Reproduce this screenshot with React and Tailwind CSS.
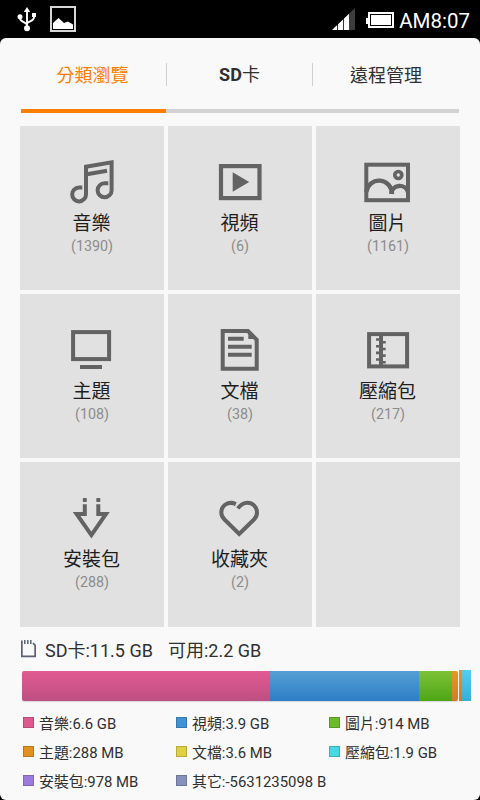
const MusicIcon = () => (
  <g fill="none" stroke="#636363" strokeWidth="4">
    <path d="M62.3 61.6 H59 A6.9 6.9 0 1 0 66 68.3 V40.8 L91.6 36.4 V64.2 A7 7 0 1 1 84.6 57.3 H88.3" />
    <path d="M67 48.2 L87 44.8" />
  </g>
)

const VideoIcon = () => (
  <>
    <rect x="53" y="40.1" width="38.5" height="32" fill="none" stroke="#636363" strokeWidth="4.2" />
    <path d="M64.7 46.3 L81.2 56 L64.7 65.8 Z" fill="#636363" />
  </>
)

const PictureIcon = () => (
  <g fill="none" stroke="#636363" strokeWidth="4">
    <rect x="50.3" y="38.7" width="41.7" height="35.5" />
    <circle cx="82.3" cy="49" r="3.5" strokeWidth="3.7" />
    <path d="M50.3 66 A12.9 12.9 0 0 1 76 68" strokeWidth="4.4" />
    <path d="M75.2 68 A8.6 8.6 0 0 1 92 66" strokeWidth="4.4" />
  </g>
)

const ThemeIcon = () => (
  <g fill="none" stroke="#636363" strokeWidth="4">
    <rect x="53.1" y="38.1" width="36" height="27" />
    <path d="M60 73 H82" />
  </g>
)

const DocIcon = () => (
  <g fill="none" stroke="#636363" strokeWidth="4">
    <path d="M54.7 37 H80 L88.7 45.8 V74.7 H54.7 Z" />
    <path d="M80.3 35.3 V45 H90.5 Z" fill="#636363" stroke="none" />
    <path d="M60 44.7 H75.7 M60 52.7 H83.7 M60 60.7 H83.7" />
  </g>
)

const ZipIcon = () => (
  <g fill="none" stroke="#636363" strokeWidth="4">
    <rect x="53.1" y="40.1" width="38" height="32.3" />
    <path d="M65 40 V72" />
    <path
      d="M60 45.5 H64 M60 52.2 H64 M60 58.9 H64 M60 65.5 H64 M66 48.3 H69.7 M66 55 H69.7 M66 61.6 H69.7 M66 68.2 H69.7"
      strokeWidth="2.6"
    />
  </g>
)

const InstallIcon = () => (
  <>
    <path d="M64.8 42.3 V51.9 H56.6 L71.4 73.1 L86 51.9 H78.3 V42.3" fill="none" stroke="#636363" strokeWidth="4" />
    <rect x="62.8" y="36" width="4" height="4" rx="0.8" fill="#636363" />
    <rect x="76.3" y="36" width="4" height="4" rx="0.8" fill="#636363" />
  </>
)

const HeartIcon = () => (
  <path
    d="M67.9 42.1 C60 38.5 53.3 43.7 53.3 50.5 C53.3 53.3 54.4 55.5 56.5 57.5 L71.2 72 L86 57.5 C88 55.5 89 53.3 89 50.5 C89 45 84.8 40.7 79.5 40.7 C75.2 40.7 72.2 43 69.8 46.4"
    fill="none"
    stroke="#636363"
    strokeWidth="4"
  />
)

const categories = [
  { label: '音樂', count: 1390, icon: MusicIcon },
  { label: '視頻', count: 6, icon: VideoIcon },
  { label: '圖片', count: 1161, icon: PictureIcon },
  { label: '主題', count: 108, icon: ThemeIcon },
  { label: '文檔', count: 38, icon: DocIcon },
  { label: '壓縮包', count: 217, icon: ZipIcon },
  { label: '安裝包', count: 288, icon: InstallIcon },
  { label: '收藏夾', count: 2, icon: HeartIcon },
]

const legend = [
  { label: '音樂', size: '6.6 GB', color: 'bg-[#dd5a8e] border-[#b84a76]' },
  { label: '視頻', size: '3.9 GB', color: 'bg-[#4292d1] border-[#3778ac]' },
  { label: '圖片', size: '914 MB', color: 'bg-[#6cbb2a] border-[#599a24]' },
  { label: '主題', size: '288 MB', color: 'bg-[#e09120] border-[#b9781c]' },
  { label: '文檔', size: '3.6 MB', color: 'bg-[#e0d044] border-[#b8ab3a]' },
  { label: '壓縮包', size: '1.9 GB', color: 'bg-[#45d9e4] border-[#3ab2bb]' },
  { label: '安裝包', size: '978 MB', color: 'bg-[#9d7add] border-[#8165b6]' },
  { label: '其它', size: '-5631235098 B', color: 'bg-[#8590bb] border-[#6e779a]' },
]

function StatusBar() {
  return (
    <header className="flex h-[38px] items-center justify-between pl-[17px] pr-[10px] text-white">
      <div className="flex items-center gap-[14px]">
        <svg width="19" height="26" viewBox="17 6 19 26" fill="none" stroke="#fff" strokeWidth="1.9">
          <path d="M27 11 V28 M20 17 V18.5 C20 22 27 22 27 25 M34 15 V17.5 C34 21.5 27 21 27 24" />
          <path d="M27 7 L30.2 12 H23.8 Z" fill="#fff" stroke="none" />
          <circle cx="20" cy="16.7" r="2.5" fill="#fff" stroke="none" />
          <rect x="32" y="13" width="4" height="4" fill="#fff" stroke="none" />
          <circle cx="27" cy="28.2" r="3" fill="#fff" stroke="none" />
        </svg>
        <svg width="26" height="26" viewBox="50 6 26 26">
          <rect x="51" y="7" width="24" height="24" fill="none" stroke="#d6d6d6" strokeWidth="2" />
          <path d="M53 29 V23 L58.5 18 L64 23 L68 21.5 L73 24.5 V29 Z" fill="#fff" />
        </svg>
      </div>
      <div className="flex items-center">
        <svg width="62" height="24" viewBox="332 7 62 24">
          <path d="M332 30 L355 8 V30 Z" fill="#fff" />
          <path d="M349 8 H355 V30 H349 Z" fill="#000" />
          <path d="M349 13.7 L355 8 V30 H349 Z" fill="#3d3d3d" />
          <path d="M337.5 23 V30 M343.5 18 V30" stroke="#000" strokeWidth="0.8" />
          <rect x="366" y="18" width="3" height="6" fill="#fff" />
          <rect x="369" y="13" width="24" height="14" fill="none" stroke="#fff" strokeWidth="2" />
          <rect x="371" y="15" width="20" height="10" fill="#fff" />
          <rect x="370.5" y="14.5" width="21" height="11" fill="none" stroke="#000" strokeWidth="0.9" />
        </svg>
        <span className="ml-[5px] mt-[3px] text-[20.5px] leading-6">AM8:07</span>
      </div>
    </header>
  )
}

function Tabs() {
  return (
    <nav className="mx-[21px] h-[75px] text-[18px]">
      <div className="flex h-[71px] items-center pt-[1px]">
        <div className="w-[145px] pr-[2px] pt-[2px] text-center text-[#ff7e00]">分類瀏覽</div>
        <div className="h-[23px] w-px bg-[#d0d0d0]" />
        <div className="w-[145px] text-center">
          <b className="font-bold">SD</b>卡
        </div>
        <div className="h-[23px] w-px bg-[#d0d0d0]" />
        <div className="w-[146px] pt-[2px] text-center">遠程管理</div>
      </div>
      <div className="h-1 bg-[#d2d2d2]">
        <div className="h-1 w-[145px] bg-[#ff7e00]" />
      </div>
    </nav>
  )
}

function Tile({ label, count, icon: Icon }) {
  return (
    <div className="flex flex-col items-center bg-[#e1e1e1] pt-7">
      <svg width="60" height="52" viewBox="42 28 60 52" className="shrink-0">
        <Icon />
      </svg>
      <div className="mt-[6px] pr-px text-[19px] leading-6 text-[#1e1e1e]">{label}</div>
      <div className="text-[14.3px] leading-5 text-[#8c8c8c]">({count})</div>
    </div>
  )
}

function UsageBar() {
  return (
    <div className="ml-[22px] flex h-[31px] items-end">
      <div className="flex h-[30px] w-[436px] overflow-hidden rounded-[2px] shadow-[0_1px_1px_#d8d8d8]">
        <div className="w-[248px] bg-linear-to-b from-[#e15b91] to-[#be4f82]" />
        <div className="w-[149px] bg-linear-to-b from-[#559fd4] to-[#2b7ec6]" />
        <div className="w-[33px] bg-linear-to-b from-[#7ec236] to-[#4ba614]" />
        <div className="w-[6px] bg-linear-to-b from-[#e69823] to-[#cf7c2b]" />
      </div>
      <div className="ml-px h-[31px] w-[3px] bg-linear-to-b from-[#e69823] to-[#cf7c2b]" />
      <div className="h-[31px] w-[9px] bg-linear-to-b from-[#53cdf0] to-[#33afd8]" />
    </div>
  )
}

export default function App() {
  return (
    <div className="h-[800px] w-[480px] overflow-hidden bg-black font-[Roboto,'Noto_Sans_CJK_TC',sans-serif] text-[#303030]">
      <StatusBar />
      <main className="h-[762px] rounded-[6px] bg-[#f9f9f9]">
        <Tabs />
        <section className="mx-5 mt-[13px] grid grid-cols-3 grid-rows-[164px_164px_165px] gap-1">
          {categories.map((c) => (
            <Tile key={c.label} {...c} />
          ))}
          <div className="bg-[#e1e1e1]" />
        </section>

        <section>
          <div className="flex h-[43px] items-center pl-[21px] pt-[4px] text-[18px]">
            <svg width="15" height="18" viewBox="0 0 15 18" className="mr-[9px] -mt-[4px]" fill="none" stroke="#5c6273">
              <path d="M0.8 0.5 V16.3 H14.2 V5.5 L12 3" strokeWidth="1.8" />
              <path d="M3.8 0 V4 M6.8 0 V4 M9.8 0 V4" strokeWidth="1.5" />
            </svg>
            <span>SD卡:11.5 GB</span>
            <span className="ml-[15px]">可用:2.2 GB</span>
          </div>
          <UsageBar />
          <div className="ml-[23px] mt-[7px] grid auto-rows-[29px] grid-cols-[153px_153px_1fr] text-[14.9px]">
            {legend.map(({ label, size, color }) => (
              <div key={label} className="flex items-center whitespace-nowrap">
                <span className={`mr-[5px] size-[11px] border ${color}`} />
                <span className="pt-[3px]">
                  {label}:{size}
                </span>
              </div>
            ))}
          </div>
        </section>
      </main>
    </div>
  )
}
